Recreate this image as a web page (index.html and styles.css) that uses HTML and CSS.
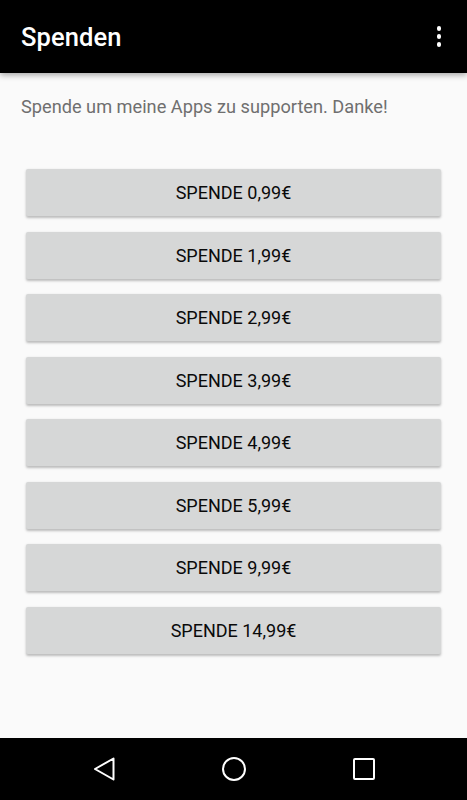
FILE: index.html
```html
<!DOCTYPE html>
<html>
<head>
<meta charset="utf-8">
<link rel="stylesheet" href="styles.css">
</head>
<body>
<div class="screen">
  <header class="appbar">
    <h1 class="title">Spenden</h1>
    <div class="overflow"><span></span><span></span><span></span></div>
  </header>
  <main class="content">
    <p class="intro">Spende um meine Apps zu supporten. Danke!</p>
    <div class="buttons">
      <button class="btn">SPENDE 0,99€</button>
      <button class="btn">SPENDE 1,99€</button>
      <button class="btn">SPENDE 2,99€</button>
      <button class="btn">SPENDE 3,99€</button>
      <button class="btn">SPENDE 4,99€</button>
      <button class="btn">SPENDE 5,99€</button>
      <button class="btn">SPENDE 9,99€</button>
      <button class="btn">SPENDE 14,99€</button>
    </div>
  </main>
  <nav class="navbar">
    <svg width="24" height="24" viewBox="0 0 24 24"><path d="M21.5 1.5 L3 12 L21.5 22.5 Z" fill="none" stroke="#fff" stroke-width="2" stroke-linejoin="round"/></svg>
    <svg width="26" height="26" viewBox="0 0 26 26"><circle cx="13" cy="13" r="11" fill="none" stroke="#fff" stroke-width="2"/></svg>
    <svg width="24" height="24" viewBox="0 0 24 24"><rect x="2" y="2" width="20" height="20" rx="1" fill="none" stroke="#fff" stroke-width="2"/></svg>
  </nav>
</div>
</body>
</html>
```

FILE: styles.css
```css
* { box-sizing: border-box; }
html, body { margin: 0; padding: 0; }
body { font-family: Roboto, "Noto Sans", sans-serif; background: #fafafa; }
.screen { width: 467px; height: 800px; display: flex; flex-direction: column; }
.appbar {
  height: 73px; background: #000; display: flex; align-items: center;
  justify-content: space-between; padding: 0 26px 0 21px;
  box-shadow: 0 2px 6px rgba(0,0,0,0.35); position: relative; z-index: 1;
}
.title { margin: 0; color: #fff; font-size: 25.5px; font-weight: 500; letter-spacing: 0.1px; }
.overflow { display: flex; flex-direction: column; gap: 3.5px; }
.overflow span { width: 4.5px; height: 4.5px; border-radius: 50%; background: #fff; display: block; }
.content { flex: 1; }
.intro { margin: 23px 0 0 21px; font-size: 18.2px; color: #6f6f6f; line-height: 22px; }
.buttons { display: flex; flex-direction: column; gap: 15.5px; padding: 0 26px; margin-top: 51px; }
.btn {
  height: 47px; border: none; border-radius: 2px; background: #d6d7d7;
  font-family: Roboto, sans-serif; font-size: 18px; font-weight: 400; color: #0a0a0a;
  box-shadow: 0 1.5px 2.5px rgba(0,0,0,0.25); padding: 0;
}
.navbar {
  height: 62px; background: #000; display: grid;
  grid-template-columns: repeat(3, 130px); justify-content: center;
  justify-items: center; align-items: center;
}
```
